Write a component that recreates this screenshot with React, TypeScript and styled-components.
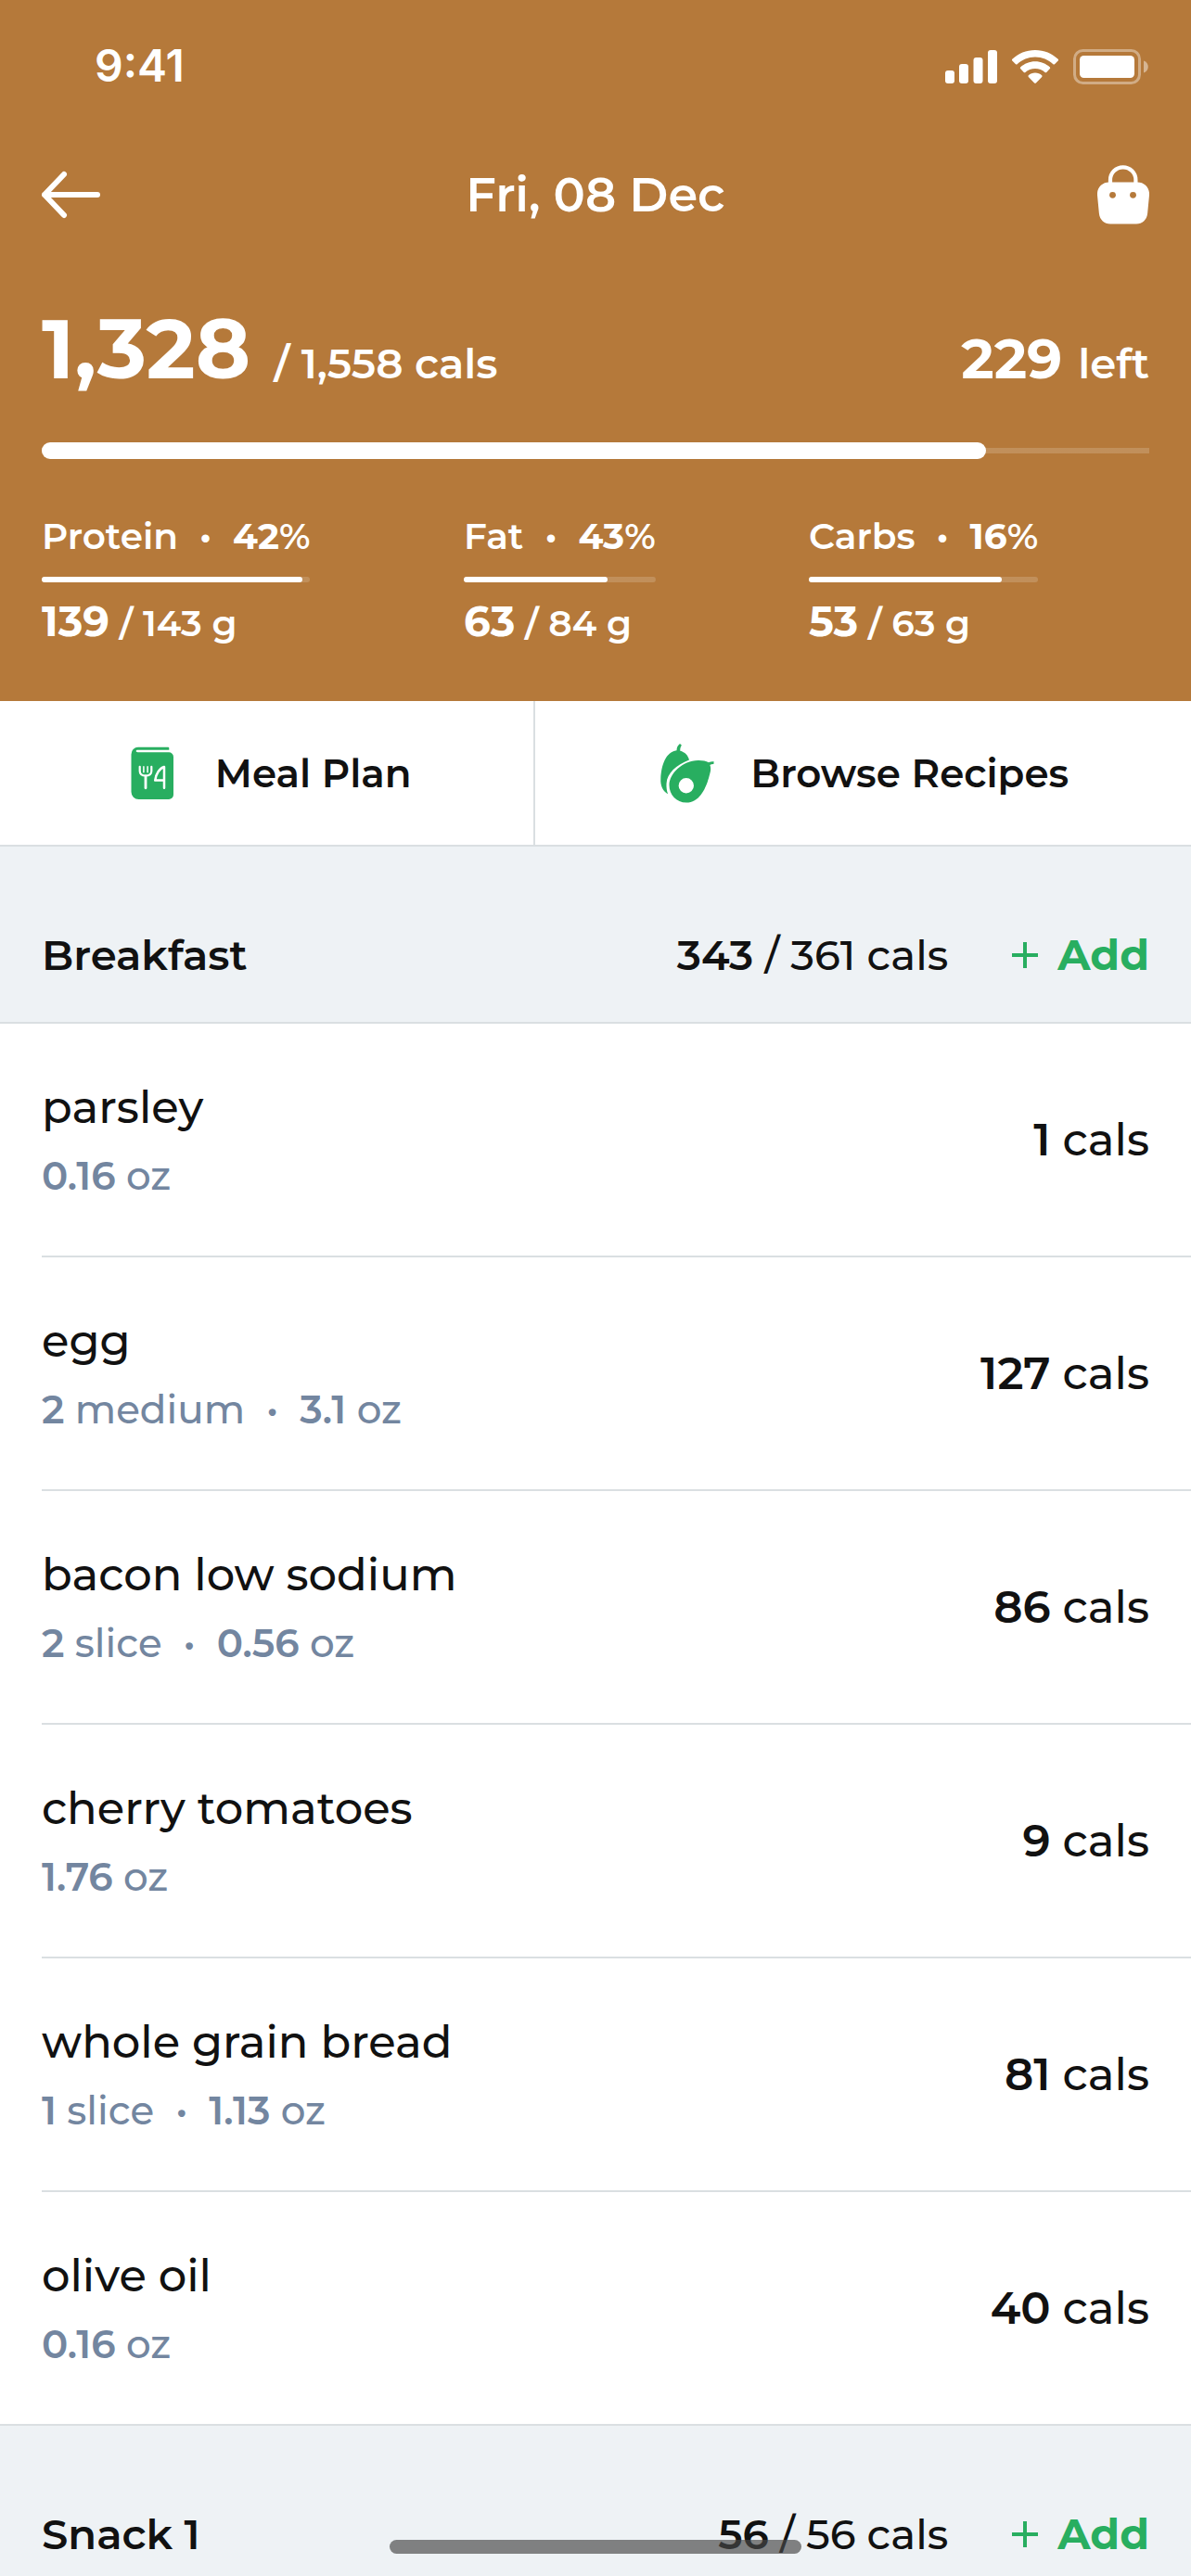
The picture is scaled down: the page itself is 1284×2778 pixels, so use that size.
import React from "react";
import styled, { createGlobalStyle } from "styled-components";

const color = {
  brand: "#b5793a",
  green: "#28ae60",
  ink: "#111111",
  muted: "#7386a0",
  panel: "#eef2f5",
  line: "#dadfe2",
};

const GlobalStyle = createGlobalStyle`
  *, *::before, *::after { box-sizing: border-box; }
  body {
    margin: 0;
    background: #ffffff;
    color: ${color.ink};
    font-family: Montserrat, Inter, "Open Sans", sans-serif;
    font-weight: 500;
  }
  button { border: 0; padding: 0; background: none; color: inherit; font: inherit; cursor: pointer; }
  h1, h2, p, ul { margin: 0; padding: 0; font: inherit; }
  svg { display: block; flex: none; }
`;

const Screen = styled.div`
  position: relative;
  display: flex;
  flex-direction: column;
  height: 100vh;
  overflow: hidden;
`;

const Header = styled.header`
  flex: none;
  padding: 0 45px 56px;
  background: ${color.brand};
  color: #ffffff;
  font-weight: 600;
`;

const StatusBar = styled.div`
  display: flex;
  align-items: center;
  justify-content: space-between;
  height: 140px;
  padding-left: 57px;
  font-family: Inter, sans-serif;
  font-size: 48px;
`;

const StatusIcons = styled.div`
  display: flex;
  align-items: center;
  gap: 16px;
  padding-top: 4px;
`;

const NavBar = styled.nav`
  display: grid;
  grid-template-columns: 1fr auto 1fr;
  align-items: center;
  height: 140px;
`;

const NavTitle = styled.h1`
  font-size: 51px;
  line-height: 60px;
`;

const IconButton = styled.button<{ $end?: boolean }>`
  justify-self: ${(p) => (p.$end ? "end" : "start")};
`;

const Totals = styled.div`
  display: flex;
  align-items: baseline;
  justify-content: space-between;
  margin: 46px 0 35px;
  font-size: 45px;
  line-height: 100px;
`;

const Eaten = styled.strong`
  font-size: 90px;
  font-weight: 700;
`;

const Left = styled.strong`
  font-size: 60px;
  font-weight: 700;
`;

const Track = styled.div<{ $thick?: boolean }>`
  display: flex;
  align-items: center;
  height: ${(p) => (p.$thick ? 18 : 6)}px;
  background: linear-gradient(rgba(255, 255, 255, 0.17), rgba(255, 255, 255, 0.17)) center / 100% 6px no-repeat;
  border-radius: 3px;
`;

const Fill = styled.div`
  height: 100%;
  border-radius: 9px;
  background: #ffffff;
`;

const Macros = styled.div`
  display: grid;
  grid-template-columns: 455fr 372fr 367fr;
  justify-items: start;
  margin-top: 59px;
`;

const Macro = styled.section`
  display: flex;
  flex-direction: column;
`;

const MacroLabel = styled.h2`
  display: flex;
  gap: 23px;
  margin-bottom: 20px;
  font-size: 39px;
  line-height: 48px;
`;

const MacroShare = styled.strong`
  font-weight: 700;
`;

const Percent = styled.span`
  font-weight: 600;
`;

const MacroValue = styled.p`
  margin-top: 14px;
  font-size: 39px;
  line-height: 56px;
`;

const MacroAmount = styled.strong`
  font-size: 45px;
  font-weight: 700;
`;

const Strong = styled.strong`
  font-weight: 600;
`;

const Tabs = styled.div`
  display: flex;
  flex: none;
  height: 157px;
  border-bottom: 2px solid ${color.line};
`;

const Tab = styled.button`
  display: flex;
  flex: 1 1 auto;
  align-items: center;
  justify-content: center;
  gap: 36px;
  font-size: 42px;
  font-weight: 600;

  & + & { border-left: 2px solid ${color.line}; }
`;

const Diary = styled.main`
  flex: 1;
  min-height: 0;
  overflow-y: auto;
  scrollbar-width: none;
`;

const MealHeader = styled.header`
  display: flex;
  align-items: center;
  padding: 87px 45px 42px;
  border-bottom: 2px solid ${color.line};
  background: ${color.panel};
  font-size: 45px;
  line-height: 60px;
`;

const MealName = styled.h2`
  flex: 1;
  font-weight: 600;
`;

const AddButton = styled.button`
  display: flex;
  align-items: center;
  gap: 20px;
  margin-left: 68px;
  color: ${color.green};
  font-size: 46px;
  font-weight: 700;
`;

const FoodList = styled.ul`
  list-style: none;
`;

const Food = styled.li`
  display: flex;
  align-items: center;
  justify-content: space-between;
  height: 252px;
  margin-left: 45px;
  padding-right: 45px;
  border-bottom: 2px solid ${color.line};
  font-size: 48px;

  &:last-child { margin-left: 0; padding-left: 45px; }
`;

const FoodName = styled.p`
  margin-bottom: 18px;
  line-height: 60px;
`;

const FoodAmount = styled.p`
  display: flex;
  gap: 23px;
  color: ${color.muted};
  font-size: 42px;
  line-height: 52px;
`;

const HomeIndicator = styled.div`
  position: absolute;
  bottom: 24px;
  left: 50%;
  width: 444px;
  height: 15px;
  border-radius: 8px;
  background: rgba(72, 72, 72, 0.67);
  transform: translateX(-50%);
`;

const SignalIcon = () => (
  <svg width="56" height="36" viewBox="0 0 56 36" fill="currentColor" aria-hidden="true">
    <rect x="0" y="22" width="10" height="14" rx="3" />
    <rect x="15" y="15" width="10" height="21" rx="3" />
    <rect x="30.5" y="8" width="10" height="28" rx="3" />
    <rect x="46" y="0" width="10" height="36" rx="3" />
  </svg>
);

const WifiIcon = () => (
  <svg width="50" height="36" viewBox="0 0 50 36" fill="currentColor" aria-hidden="true">
    <path d="M25 0C34.6 0 43.300 3.700 49.700 9.800c.5.500.5 1.100 0 1.600L46 15.200c-.5.500-1.100.5-1.600 0C39.300 10.300 32.500 7.400 25 7.400S10.700 10.300 5.600 15.200c-.5.500-1.100.5-1.600 0L.3 11.400c-.5-.500-.5-1.100 0-1.600C6.700 3.700 15.400 0 25 0Z" />
    <path d="M25 12.300c6.100 0 11.700 2.400 15.900 6.200.5.500.5 1.100 0 1.600l-3.700 3.800c-.5.500-1.100.5-1.600.1-2.800-2.600-6.500-4.100-10.600-4.100s-7.800 1.500-10.600 4.100c-.5.400-1.100.4-1.600-.1l-3.700-3.800c-.5-.500-.5-1.100 0-1.600 4.200-3.800 9.800-6.200 15.900-6.200Z" />
    <path d="M25 24.600c2.800 0 5.300 1 7.200 2.700.5.500.5 1.100 0 1.600l-6.300 6.500c-.5.500-1.300.5-1.800 0l-6.300-6.500c-.5-.500-.5-1.100 0-1.600 1.900-1.700 4.400-2.700 7.200-2.700Z" />
  </svg>
);

const BatteryIcon = () => (
  <svg width="82" height="38" viewBox="0 0 82 38" aria-hidden="true">
    <rect x="1.500" y="1.500" width="70" height="35" rx="9" fill="none" stroke="#fff" strokeOpacity=".38" strokeWidth="3" />
    <rect x="7" y="7" width="59" height="24" rx="4.500" fill="#fff" />
    <path d="M76 12.500c3 1.200 4.800 3.600 4.800 6.500S79 24.300 76 25.500Z" fill="#fff" fillOpacity=".45" />
  </svg>
);

const BackIcon = () => (
  <svg width="64" height="52" viewBox="0 0 64 52" fill="none" stroke="currentColor" strokeWidth="6" strokeLinecap="round" strokeLinejoin="round" aria-hidden="true">
    <path d="M60 26H3M24 4 3 26l21 22" />
  </svg>
);

const BagIcon = () => (
  <svg width="56" height="64" viewBox="0 0 56 64" aria-hidden="true">
    <path d="M14 20v-4a13.700 13.700 0 0 1 27.400 0v4" fill="none" stroke="#fff" strokeWidth="4.200" />
    <path d="M13 18.400h30c8 0 13.600 6 13 14l-1.900 19.800C53.300 59 48.500 63.500 42 63.500H14C7.500 63.500 2.700 59 1.900 52.200L0 32.400c-.6-8 5-14 13-14Z" fill="#fff" />
    <circle cx="16.500" cy="32.300" r="3.400" fill={color.brand} />
    <circle cx="38.500" cy="32.300" r="3.400" fill={color.brand} />
  </svg>
);

const BookIcon = () => (
  <svg width="64" height="64" viewBox="0 0 64 64" aria-hidden="true">
    <path d="M17 3.800h32.300a1 1 0 0 1 1 1v2H16.500c-1.200 0-1.800.5-1.800 1.200s.6 1.200 1.800 1.200H50a5 5 0 0 1 5 5V55a5 5 0 0 1-5 5H17.500a8 8 0 0 1-8-8V11.500A7.500 7.500 0 0 1 17 3.800Z" fill={color.green} />
    <g fill="none" stroke="#fff" strokeLinecap="round" strokeLinejoin="round">
      <path d="M18.700 24.800v4.700c0 3.200 2.500 5 6.300 5s6.300-1.800 6.300-5v-4.700" strokeWidth="2.200" />
      <path d="M22.900 24.800v6M27.100 24.800v6" strokeWidth="1.500" />
      <path d="M25 35v12.800" strokeWidth="2.800" />
      <path d="M45 47.800V25c-5 1.500-9 7.500-9.800 14.600H45" strokeWidth="2.500" />
    </g>
  </svg>
);

const AvocadoIcon = () => (
  <svg width="64" height="66" viewBox="0 0 64 66" fill={color.green} aria-hidden="true">
    <path d="M20.500 8.300C20.500 5 21.800 2.800 24 1l1.900 1.700c-1.300 1.700-1.800 3.500-1.600 6C29.300 10 32.900 13.500 34 18.600 20 24 10.200 33 9.500 44c-.2 4.300.3 7.800 1.600 11.300C5.600 52.500 2.800 46.500 3.300 38.500 4 24.500 8.500 10 20.500 8.300Z" />
    <path d="M55 21.200c1.700-.9 3.500-1.200 5.600-1l-.2 2.900c-1.700-.1-3 .2-4 1 .9 2.300 1 4.700.3 7.700C53.200 46.500 46.500 64.500 31 64.500c-10.800 0-18.500-8.300-18.500-18.800C12.500 33 27 19.300 43.500 19c5-.1 8.500.6 11.500 2.200ZM30.800 38a8.200 8.200 0 1 0 0 16.400 8.200 8.200 0 0 0 0-16.400Z" fillRule="evenodd" />
  </svg>
);

const PlusIcon = () => (
  <svg width="30" height="30" viewBox="0 0 30 30" fill="none" stroke="currentColor" strokeWidth="4" aria-hidden="true">
    <path d="M15 1v28M1 15h28" />
  </svg>
);

const macros = [
  { name: "Protein", share: 42, eaten: 139, goal: 143 },
  { name: "Fat", share: 43, eaten: 63, goal: 84 },
  { name: "Carbs", share: 16, eaten: 53, goal: 63 },
];

type Portion = [amount: string, unit: string];
interface FoodEntry { name: string; portions: Portion[]; cals: number }
interface MealEntry { name: string; eaten: number; goal: number; foods: FoodEntry[] }

const meals: MealEntry[] = [
  {
    name: "Breakfast",
    eaten: 343,
    goal: 361,
    foods: [
      { name: "parsley", portions: [["0.16", "oz"]], cals: 1 },
      { name: "egg", portions: [["2", "medium"], ["3.1", "oz"]], cals: 127 },
      { name: "bacon low sodium", portions: [["2", "slice"], ["0.56", "oz"]], cals: 86 },
      { name: "cherry tomatoes", portions: [["1.76", "oz"]], cals: 9 },
      { name: "whole grain bread", portions: [["1", "slice"], ["1.13", "oz"]], cals: 81 },
      { name: "olive oil", portions: [["0.16", "oz"]], cals: 40 },
    ],
  },
  { name: "Snack 1", eaten: 56, goal: 56, foods: [] },
];

interface ProgressProps { label: string; value: number; max: number; thick?: boolean }

const Progress = ({ label, value, max, thick }: ProgressProps) => (
  <Track $thick={thick} role="progressbar" aria-label={label} aria-valuenow={value} aria-valuemax={max}>
    <Fill style={{ width: `${(value / max) * 100}%` }} />
  </Track>
);

const Meal = ({ meal }: { meal: MealEntry }) => (
  <section>
    <MealHeader>
      <MealName>{meal.name}</MealName>
      <p><Strong>{meal.eaten}</Strong> / {meal.goal} cals</p>
      <AddButton type="button"><PlusIcon />Add</AddButton>
    </MealHeader>
    <FoodList>
      {meal.foods.map((food) => (
        <Food key={food.name}>
          <div>
            <FoodName>{food.name}</FoodName>
            <FoodAmount>
              {food.portions.map(([amount, unit], i) => (
                <React.Fragment key={unit}>
                  {i > 0 && <span>•</span>}
                  <span><Strong>{amount}</Strong> {unit}</span>
                </React.Fragment>
              ))}
            </FoodAmount>
          </div>
          <p><Strong>{food.cals}</Strong> cals</p>
        </Food>
      ))}
    </FoodList>
  </section>
);

export default function App() {
  return (
    <Screen>
      <GlobalStyle />
      <Header>
        <StatusBar>
          <span>9:41</span>
          <StatusIcons><SignalIcon /><WifiIcon /><BatteryIcon /></StatusIcons>
        </StatusBar>
        <NavBar>
          <IconButton type="button" aria-label="Back"><BackIcon /></IconButton>
          <NavTitle>Fri, 08 Dec</NavTitle>
          <IconButton type="button" aria-label="Shopping bag" $end><BagIcon /></IconButton>
        </NavBar>
        <Totals>
          <p><Eaten>{"1,328 "}</Eaten>/ 1,558 cals</p>
          <p><Left>{"229 "}</Left>left</p>
        </Totals>
        <Progress label="Calories" value={1328} max={1558} thick />
        <Macros>
          {macros.map((m) => (
            <Macro key={m.name}>
              <MacroLabel>
                <span>{m.name}</span>
                <span>•</span>
                <MacroShare>{m.share}<Percent>%</Percent></MacroShare>
              </MacroLabel>
              <Progress label={m.name} value={m.eaten} max={m.goal} />
              <MacroValue><MacroAmount>{m.eaten}</MacroAmount> / {m.goal} g</MacroValue>
            </Macro>
          ))}
        </Macros>
      </Header>
      <Tabs>
        <Tab type="button"><BookIcon />Meal Plan</Tab>
        <Tab type="button"><AvocadoIcon />Browse Recipes</Tab>
      </Tabs>
      <Diary>
        {meals.map((meal) => <Meal key={meal.name} meal={meal} />)}
      </Diary>
      <HomeIndicator />
    </Screen>
  );
}
